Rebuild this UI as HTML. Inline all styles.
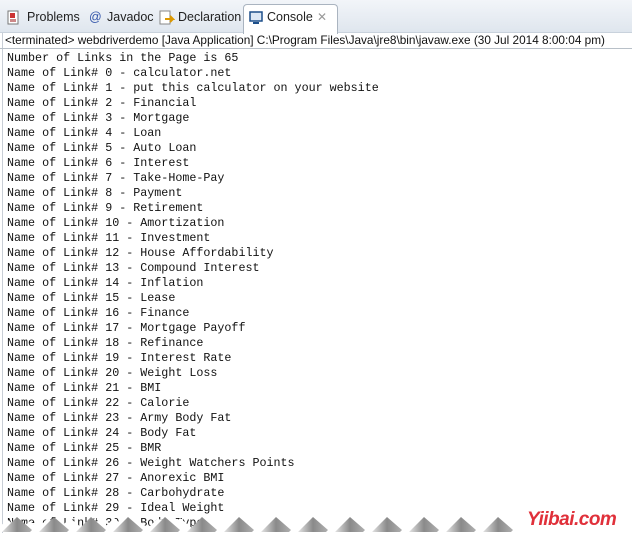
<!DOCTYPE html><html><head><style>
body{margin:0;width:632px;height:532px;overflow:hidden;background:#fff;position:relative;font-family:"Liberation Sans",sans-serif}
.bar{position:absolute;left:0;top:0;width:632px;height:32px;background:linear-gradient(#f2f5f9,#dfe6ee);border-bottom:1px solid #c9d2dc}
.tab{position:absolute;top:10px;font-size:12.5px;color:#222}
.act{position:absolute;left:243px;top:4px;width:93px;height:29px;background:#fff;border:1px solid #aab4c0;border-bottom:none;border-radius:4px 4px 0 0}
.hdr{position:absolute;left:5px;top:33px;font-size:11.8px;color:#111;white-space:nowrap}
.line{position:absolute;left:0;top:48px;width:632px;height:1px;background:#b8c0c8}
pre{position:absolute;left:7px;top:51px;margin:0;font-family:"Liberation Mono",monospace;font-size:11.7px;line-height:15px;color:#111}
.lb{position:absolute;left:2px;top:33px;width:1px;height:500px;background:#c8ced6}
</style></head><body>
<div class="bar"></div>
<div class="act"></div>
<svg style="position:absolute;left:7px;top:10px" width="16" height="16"><rect x="1" y="1" width="10" height="13" fill="#fff" stroke="#777"/><rect x="3" y="3" width="5" height="5" fill="#c33"/><rect x="3" y="9" width="6" height="3" fill="#c88"/></svg>
<div class="tab" style="left:27px">Problems</div>
<div class="tab" style="left:89px;color:#35a">@</div>
<div class="tab" style="left:107px">Javadoc</div>
<svg style="position:absolute;left:159px;top:10px" width="16" height="16"><rect x="1" y="1" width="10" height="13" fill="#fff" stroke="#888"/><path d="M6 9h8l-3-3M14 9l-3 3" stroke="#d90" stroke-width="2" fill="none"/></svg>
<div class="tab" style="left:178px">Declaration</div>
<svg style="position:absolute;left:249px;top:11px" width="14" height="14"><rect x="1" y="1" width="12" height="9" fill="#dde8f5" stroke="#1d4f8a" stroke-width="1.5"/><rect x="4" y="11" width="6" height="2" fill="#1d4f8a"/></svg>
<div class="tab" style="left:267px">Console</div>
<div class="tab" style="left:317px;color:#999;font-size:12px">✕</div>
<div class="lb"></div>
<div class="hdr">&lt;terminated&gt; webdriverdemo [Java Application] C:\Program Files\Java\jre8\bin\javaw.exe (30 Jul 2014 8:00:04 pm)</div>
<div class="line"></div>
<pre>Number of Links in the Page is 65
Name of Link# 0 - calculator.net
Name of Link# 1 - put this calculator on your website
Name of Link# 2 - Financial
Name of Link# 3 - Mortgage
Name of Link# 4 - Loan
Name of Link# 5 - Auto Loan
Name of Link# 6 - Interest
Name of Link# 7 - Take-Home-Pay
Name of Link# 8 - Payment
Name of Link# 9 - Retirement
Name of Link# 10 - Amortization
Name of Link# 11 - Investment
Name of Link# 12 - House Affordability
Name of Link# 13 - Compound Interest
Name of Link# 14 - Inflation
Name of Link# 15 - Lease
Name of Link# 16 - Finance
Name of Link# 17 - Mortgage Payoff
Name of Link# 18 - Refinance
Name of Link# 19 - Interest Rate
Name of Link# 20 - Weight Loss
Name of Link# 21 - BMI
Name of Link# 22 - Calorie
Name of Link# 23 - Army Body Fat
Name of Link# 24 - Body Fat
Name of Link# 25 - BMR
Name of Link# 26 - Weight Watchers Points
Name of Link# 27 - Anorexic BMI
Name of Link# 28 - Carbohydrate
Name of Link# 29 - Ideal Weight
Name of Link# 30 - Body Type</pre>
<svg style="position:absolute;left:0;top:512px" width="632" height="20">
<defs><linearGradient id="g" x1="0" x2="1"><stop offset="0" stop-color="#e4e4e4"/><stop offset=".5" stop-color="#8a8a8a"/><stop offset="1" stop-color="#b0b0b0"/></linearGradient></defs>
<path d="M0 20 L0 14 L8 8 L20 18 L30 9 L38 16 L48 6 L60 16 L70 6 L82 16 L92 6 L104 16 L114 6 L126 16 L136 6 L148 16 L158 6 L170 16 L180 6 L192 16 L202 6 L214 16 L224 6 L236 16 L246 6 L258 16 L268 6 L280 16 L290 6 L302 16 L312 6 L324 16 L334 6 L346 16 L356 6 L368 16 L378 6 L390 16 L400 6 L412 16 L422 6 L434 16 L444 6 L456 16 L466 6 L478 16 L488 6 L500 16 L510 6 L522 16 L532 6 L544 16 L554 6 L566 16 L576 6 L588 16 L598 6 L610 16 L620 6 L632 16 L632 20 Z" fill="#fff"/>
<g fill="url(#g)">
<path d="M2 20 L17 5 L32 18 L30 20Z"/><path d="M39 20 L54 5 L69 18 L67 20Z"/><path d="M76 20 L91 5 L106 18 L104 20Z"/><path d="M113 20 L128 5 L143 18 L141 20Z"/><path d="M150 20 L165 5 L180 18 L178 20Z"/><path d="M187 20 L202 5 L217 18 L215 20Z"/><path d="M224 20 L239 5 L254 18 L252 20Z"/><path d="M261 20 L276 5 L291 18 L289 20Z"/><path d="M298 20 L313 5 L328 18 L326 20Z"/><path d="M335 20 L350 5 L365 18 L363 20Z"/><path d="M372 20 L387 5 L402 18 L400 20Z"/><path d="M409 20 L424 5 L439 18 L437 20Z"/><path d="M446 20 L461 5 L476 18 L474 20Z"/><path d="M483 20 L498 5 L513 18 L511 20Z"/>
</g></svg>
<div style="position:absolute;left:527px;top:509px;font:italic bold 19px 'Liberation Sans',sans-serif;letter-spacing:-0.5px;color:#e0303a;text-shadow:1px 1px 0 #fff,-1px -1px 0 #fff">Yiibai.com</div>
</body></html>
